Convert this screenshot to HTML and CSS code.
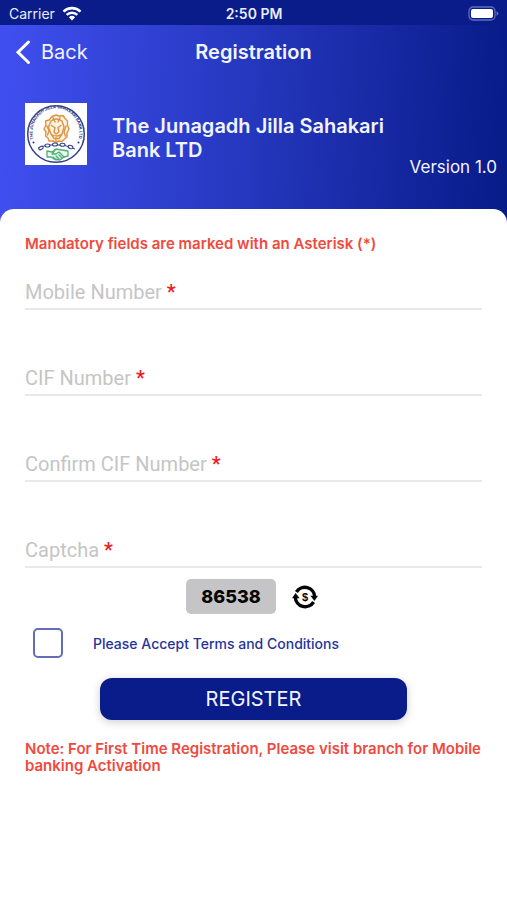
FILE: index.html
```html
<!DOCTYPE html>
<html lang="en">
<head>
<meta charset="utf-8">
<meta name="viewport" content="width=device-width, initial-scale=1">
<title>Registration</title>
<link rel="stylesheet" href="styles.css">
</head>
<body>
<div class="status">
  <span class="carrier">Carrier
    <svg width="20" height="15" viewBox="0 0 20 15" aria-hidden="true">
      <g fill="none" stroke="#fff" stroke-width="2.6">
        <path d="M1.5 5.6A12.2 12.2 0 0 1 18.500 5.6"/>
        <path d="M4.700 8.900A7.600 7.600 0 0 1 15.300 8.900"/>
      </g>
      <path d="M10 14.500L6.900 11.200A4.500 4.500 0 0 1 13.100 11.200Z" fill="#fff"/>
    </svg>
  </span>
  <span class="time">2:50 PM</span>
  <svg class="battery" width="31" height="15" viewBox="0 0 31 15" aria-hidden="true">
    <rect x="1" y="1" width="26" height="13" rx="4" fill="none" stroke="#5f6dbb" stroke-width="1.300"/>
    <rect x="3" y="3" width="22" height="9" rx="2" fill="#fff"/>
    <path d="M28.500 5.300Q30.500 6 30.500 7.500T28.500 9.700Z" fill="#5f6dbb"/>
  </svg>
</div>
<header class="header">
  <nav class="nav">
    <a class="back" href="#">
      <svg width="16" height="26" viewBox="0 0 16 26" aria-hidden="true"><path d="M13.500 3L3 13.200L13.500 23.500" fill="none" stroke="#fff" stroke-width="3" stroke-linecap="round"/></svg>
      Back
    </a>
    <h1 class="title">Registration</h1>
  </nav>
  <div class="brand">
    <svg class="logo" width="62" height="62" viewBox="0 0 62 62" role="img" aria-label="Bank emblem">
      <defs><path id="ring" d="M13 44A23.500 23.500 0 1 1 49 44"/></defs>
      <rect width="62" height="62" fill="#fff"/>
      <circle cx="31" cy="31" r="28.300" fill="none" stroke="#35418c" stroke-width="1.500"/>
      <text class="ring-text"><textPath href="#ring" startOffset="9">THE JUNAGADH JILLA SAHAKARI BANK LTD.</textPath></text>
      <circle cx="8.500" cy="39.500" r="1" fill="#29357f"/>
      <circle cx="53.500" cy="39.500" r="1" fill="#29357f"/>
      <g fill="none" stroke="#dd9440" stroke-width="1.400" stroke-linejoin="round" stroke-linecap="round">
        <path fill="#fef3e4" d="M27 13.500L31 12L34 13L38 12.500L40 15.500L42.500 18L42.500 22L44 26L42 30L42 34L39.500 36L37 38.500L34 38L31 39.500L28 38L24 38L23 35L20.500 33L21 29L19 26L21 22L20.500 18L24 17Z"/>
        <path d="M26 18Q31 14 37 18L39 24L37 31L34 35.500H29L26 31L23.500 24Z"/>
        <path d="M26.500 22.500L29.500 24.500M36 22.500L33 24.500M30 24.500L29 29L31 31L34 29L33 24.500M27.500 32Q31 34 36 32M31 35V38M22 23L24 28L22.500 32M41 23L39 29L40.500 33M28 14.500L30 19M35 14.500L33 19"/>
      </g>
      <path d="M13 45Q20 42 26 42T36 42T50 46" fill="none" stroke="#35418c" stroke-width="1"/>
      <g fill="#fff" stroke="#35418c" stroke-width="1.100">
        <ellipse cx="16" cy="45" rx="2.400" ry="1.500" transform="rotate(-30 16 45)"/><ellipse cx="22.500" cy="42.500" rx="2.500" ry="1.500"/><ellipse cx="30" cy="41.500" rx="2.500" ry="1.500"/><ellipse cx="37.500" cy="41.800" rx="2.500" ry="1.500"/><ellipse cx="45.500" cy="44" rx="2.500" ry="1.500" transform="rotate(20 45.500 44)"/>
      </g>
      <g fill="#eaf8ef" stroke="#4eae78" stroke-width="1.300" stroke-linejoin="round" stroke-linecap="round">
        <path d="M22 48L27 49L31 46L37 47L43 48V53L39 54L35 57L29 56L26 54L22 54Z"/>
        <path d="M30 47L27 51L31 51L34 49L39 54M28 54L31 57M31 53L34 56M34 52L37 55" fill="none"/>
      </g>
    </svg>
    <p class="name">The Junagadh Jilla Sahakari Bank LTD</p>
    <p class="version">Version 1.0</p>
  </div>
</header>
<main class="card">
  <form>
    <p class="alert">Mandatory fields are marked with an Asterisk (*)</p>
    <div class="fields">
      <div class="field"><input id="mobile" type="tel"><label for="mobile">Mobile Number <b>*</b></label></div>
      <div class="field"><input id="cif" type="text"><label for="cif">CIF Number <b>*</b></label></div>
      <div class="field"><input id="confirm" type="text"><label for="confirm">Confirm CIF Number <b>*</b></label></div>
      <div class="field"><input id="captcha" type="text"><label for="captcha">Captcha <b>*</b></label></div>
    </div>
    <div class="captcha">
      <output class="code" for="captcha">86538</output>
      <button class="refresh" type="button" aria-label="Refresh captcha">
        <svg width="26" height="24" viewBox="0 0 26 24" aria-hidden="true">
          <g fill="none" stroke="#050505" stroke-width="3.400">
            <path d="M4.400 7A9.900 9.900 0 0 1 22.700 12"/>
            <path d="M21.600 17A9.900 9.900 0 0 1 3.300 12"/>
          </g>
          <path d="M0 13.200L3.600 8L7.600 13.200ZM18.400 10.800H26L22.400 16Z" fill="#050505"/>
          <text class="coin" x="13" y="16">$</text>
        </svg>
      </button>
    </div>
    <div class="terms">
      <input id="terms" type="checkbox">
      <label for="terms">Please Accept Terms and Conditions</label>
    </div>
    <button class="register" type="submit">REGISTER</button>
    <p class="alert">Note: For First Time Registration, Please visit branch for Mobile banking Activation</p>
  </form>
</main>
</body>
</html>
```
FILE: styles.css
```css
* { box-sizing: border-box; }

body {
  margin: 0;
  min-height: 100vh;
  display: flex;
  flex-direction: column;
  background: #fff;
  font-family: Inter, "Liberation Sans", sans-serif;
}

h1, p { margin: 0; }
svg { display: block; }

.status {
  display: grid;
  grid-template-columns: 1fr auto 1fr;
  align-items: center;
  height: 25px;
  padding: 2px 8px 0 9px;
  background: #0a1c8a;
  color: #e9ecfb;
  font-size: 14px;
  line-height: 20px;
}

.carrier { display: flex; align-items: center; gap: 7px; }
.time { font-weight: 600; }
.battery { justify-self: end; }

.header {
  padding-bottom: 58px;
  background: linear-gradient(92deg, #404ff0 0%, #2437bd 50%, #1527a0 78%, #071b88 100%);
  color: #f2f4ff;
}

.nav {
  display: grid;
  grid-template-columns: 1fr auto 1fr;
  align-items: center;
  height: 54px;
  padding: 0 15px;
}

.back {
  display: flex;
  align-items: center;
  gap: 10px;
  color: inherit;
  font-size: 20px;
  text-decoration: none;
}

.title { font-size: 20px; font-weight: 600; }

.brand {
  display: flex;
  align-items: flex-start;
  padding: 24px 10px 0 25px;
}

.logo { flex: none; }

.ring-text {
  fill: #29357f;
  font-size: 4px;
  font-weight: 700;
}

.name {
  flex: 1;
  padding: 11px 0 0 25px;
  font-size: 20px;
  font-weight: 600;
  line-height: 24px;
}

.version {
  align-self: flex-end;
  flex: none;
  margin: 0 0 -12px -12px;
  font-size: 17px;
  line-height: 20px;
}

.card {
  flex: 1;
  margin-top: -14px;
  padding: 26px 25px;
  border-radius: 14px 14px 0 0;
  background: #fff;
}

.alert {
  color: #f04a3e;
  font-size: 15px;
  font-weight: 600;
  line-height: 17px;
}

.fields {
  display: grid;
  gap: 52px;
  padding-top: 24px;
}

.field {
  display: grid;
  height: 34px;
  border-bottom: 2px solid #e9e9e9;
}

.field input,
.field label { grid-area: 1 / 1; }

.field input {
  width: 100%;
  min-width: 0;
  padding: 0;
  border: 0;
  outline: 0;
  background: none;
  font: 20px Roboto, sans-serif;
}

.field label {
  align-self: center;
  color: #c5c5c5;
  font: 20px/24px Roboto, sans-serif;
  pointer-events: none;
}

.field b { color: #f01820; font-weight: 500; }

.captcha {
  display: flex;
  align-items: center;
  justify-content: center;
  gap: 16px;
  padding: 11px 3px 0 0;
}

.code {
  padding: 0 15px;
  border-radius: 5px;
  background: #c5c5c7;
  color: #050505;
  font-size: 18px;
  font-weight: 800;
  line-height: 35px;
}

.refresh { padding: 0; border: 0; background: none; }

.coin {
  fill: #050505;
  font-size: 11px;
  font-weight: 700;
  text-anchor: middle;
}

.terms {
  display: flex;
  align-items: center;
  gap: 30px;
  padding: 14px 8px 0;
  color: #27349a;
  font-size: 14px;
  font-weight: 500;
}

.terms input {
  appearance: none;
  width: 30px;
  height: 30px;
  margin: 0;
  border: 2px solid #626db5;
  border-radius: 5px;
}

.terms input:checked { background: #0a1c8a; }

.register {
  display: block;
  width: 67%;
  height: 42px;
  margin: 20px auto;
  border: 0;
  border-radius: 12px;
  background: #0a1c8a;
  box-shadow: 0 2px 8px rgba(0, 0, 0, .2);
  color: #f2f4ff;
  font: 20px Inter, sans-serif;
}
```
